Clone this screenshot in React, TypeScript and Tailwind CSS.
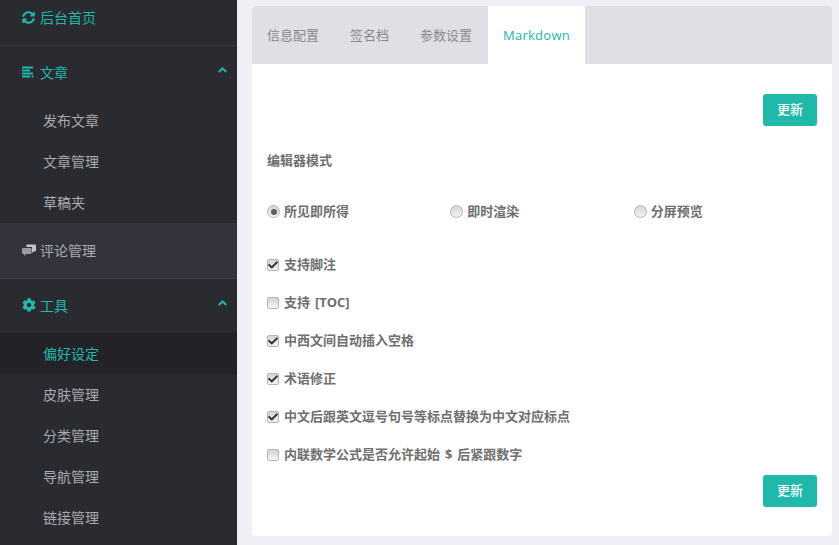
import type { ReactNode } from "react";
import { FaCheck, FaCog, FaSyncAlt } from "react-icons/fa";

const font = "font-['Open_Sans','Noto_Sans_CJK_SC',sans-serif]";

function ArticleIcon() {
    return (
        <svg width="12" height="12" viewBox="0 0 12 12" fill="currentColor">
            <rect x="0" y="0.5" width="11" height="2" />
            <rect x="0" y="3.5" width="8" height="2" />
            <rect x="0" y="6.5" width="11" height="2" />
            <rect x="0" y="9.5" width="8" height="2" />
            <rect x="9.5" y="9.5" width="2" height="2" />
        </svg>
    );
}

function CommentIcon() {
    return (
        <svg width="14" height="12" viewBox="0 0 14 12">
            <path d="M4.5 0.5H13a1 1 0 0 1 1 1V6.5a1 1 0 0 1-1 1H11.5L10 9V3H4.5z" fill="#c4c4c6" />
            <path d="M1 4H8.5a1 1 0 0 1 1 1V9a1 1 0 0 1-1 1H4L2 12V10H1a1 1 0 0 1-1-1V5a1 1 0 0 1 1-1z" fill="#9a9a9e" />
        </svg>
    );
}

function ChevronIcon() {
    return (
        <svg className="mb-[4px] ml-auto text-[#20b8aa]" width="9" height="6" viewBox="0 0 9 6" fill="currentColor">
            <path d="M4.5 0L9 4.3 7.6 5.7 4.5 2.8 1.4 5.7 0 4.3z" />
        </svg>
    );
}

function NavRow({ icon, label, active, open, height = "h-[54px] pb-[2px]" }: { icon: ReactNode; label: string; active?: boolean; open?: boolean; height?: string }) {
    return (
        <div className={`flex ${height} items-center pl-[22px] pr-[10px] text-[14px] ${active ? "text-[#20b8aa]" : "text-[#a9abb0]"}`}>
            <span className="flex w-[18px] shrink-0 items-center">{icon}</span>
            <span>{label}</span>
            {open && <ChevronIcon />}
        </div>
    );
}

function SubItem({ label, active }: { label: string; active?: boolean }) {
    return (
        <div className={`flex h-[41px] items-center pl-[43px] text-[14px] ${active ? "bg-[#232327] text-[#20b8aa]" : "text-[#a9abb0]"}`}>
            {label}
        </div>
    );
}

function Radio({ label, checked }: { label: string; checked?: boolean }) {
    return (
        <label className="flex items-center gap-[4px] text-[13px] font-bold text-[#6f6f6f]">
            <span className="flex size-[13px] items-center justify-center rounded-full border border-[#b4b4b4] bg-gradient-to-b from-[#d4d4d4] to-[#f4f4f4]">
                {checked && <span className="size-[6px] rounded-full bg-[#5c5c5c]" />}
            </span>
            {label}
        </label>
    );
}

function Check({ label, checked }: { label: string; checked?: boolean }) {
    return (
        <label className="flex h-[38px] items-center gap-[5px] text-[13px] font-bold text-[#6f6f6f] [word-spacing:1.5px]">
            <span className="flex size-[12px] items-center justify-center rounded-[2px] border border-[#b4b4b4] bg-gradient-to-b from-[#d4d4d4] to-[#f4f4f4]">
                {checked && <FaCheck className="text-[#333]" size={10} />}
            </span>
            {label}
        </label>
    );
}

function SaveButton() {
    return (
        <button className="h-[32px] w-[54px] rounded-[3px] bg-[#20b8aa] text-[13px] font-medium text-white">更新</button>
    );
}

export default function App() {
    return (
        <div className={`flex h-[545px] w-[839px] overflow-hidden bg-[#eff0f6] ${font}`}>
            {/* Sidebar, scrolled a little past its top */}
            <aside className="w-[237px] shrink-0 overflow-hidden bg-[#2a2a31]">
                <div className="-mt-[10px]">
                    <div className="border-b border-[#38383f]">
                        <NavRow icon={<FaSyncAlt size={13} />} label="后台首页" active height="h-[55px]" />
                    </div>
                    <div className="border-b border-[#38383f]">
                        <NavRow icon={<ArticleIcon />} label="文章" active open />
                        <SubItem label="发布文章" />
                        <SubItem label="文章管理" />
                        <SubItem label="草稿夹" />
                    </div>
                    <div className="border-b border-[#3c3d44] bg-[#32333c]">
                        <NavRow icon={<CommentIcon />} label="评论管理" />
                    </div>
                    <NavRow icon={<FaCog size={14} />} label="工具" active open />
                    <SubItem label="偏好设定" active />
                    <SubItem label="皮肤管理" />
                    <SubItem label="分类管理" />
                    <SubItem label="导航管理" />
                    <SubItem label="链接管理" />
                </div>
            </aside>

            <main className="pl-[15px] pt-[6px]">
                <div className="flex h-[530px] w-[580px] flex-col overflow-hidden rounded-[4px] bg-white">
                    <div className="flex h-[58px] bg-[#dfe0e5] text-[13px] text-[#8a8a8a]">
                        <div className="flex items-center pl-[15px] pr-[16px] pt-[1px]">信息配置</div>
                        <div className="flex items-center px-[15px] pt-[1px]">签名档</div>
                        <div className="flex items-center pl-[16px] pr-[16px] pt-[1px]">参数设置</div>
                        <div className="flex items-center bg-white px-[15px] pt-[1px] tracking-[0.25px] text-[#20b8aa]">Markdown</div>
                    </div>

                    <div className="flex flex-col px-[15px] pt-[30px]">
                        <div className="flex justify-end">
                            <SaveButton />
                        </div>
                        <div className="mt-[24px] text-[13px] font-bold leading-[20px] text-[#6f6f6f]">编辑器模式</div>
                        <div className="mt-[32px] grid grid-cols-3">
                            <Radio label="所见即所得" checked />
                            <Radio label="即时渲染" />
                            <Radio label="分屏预览" />
                        </div>
                        <div className="mt-[24px] flex flex-col">
                            <Check label="支持脚注" checked />
                            <Check label="支持 [TOC]" />
                            <Check label="中西文间自动插入空格" checked />
                            <Check label="术语修正" checked />
                            <Check label="中文后跟英文逗号句号等标点替换为中文对应标点" checked />
                            <Check label="内联数学公式是否允许起始 $ 后紧跟数字" />
                        </div>
                        <div className="mt-[1px] flex justify-end">
                            <SaveButton />
                        </div>
                    </div>
                </div>
            </main>
        </div>
    );
}
